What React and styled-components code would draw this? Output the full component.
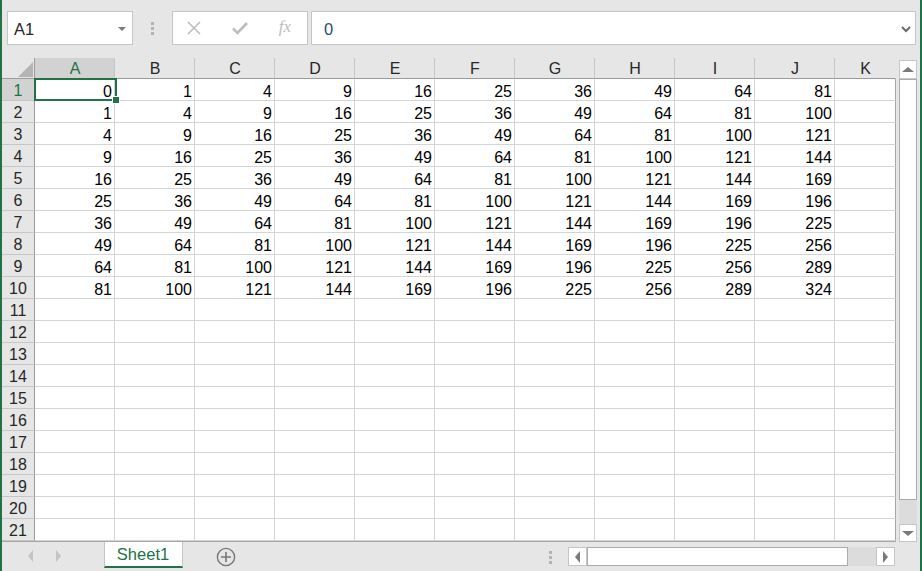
import React from 'react';
import styled, { createGlobalStyle } from 'styled-components';

const GlobalStyle = createGlobalStyle`
    html, body {
        margin: 0;
        padding: 0;
        background: #e6e6e6;
        font-family: "Liberation Sans", Arial, sans-serif;
    }
`;

const GREEN = '#217346';
const COLS = ['A', 'B', 'C', 'D', 'E', 'F', 'G', 'H', 'I', 'J', 'K'];
const ROWS = 21;

const Frame = styled.div`
    width: 922px;
    height: 571px;
    box-sizing: border-box;
    border-left: 2px solid ${GREEN};
    border-right: 2px solid ${GREEN};
    background: #e6e6e6;
    display: flex;
    flex-direction: column;
    overflow: hidden;
`;

const Toolbar = styled.div`
    height: 58px;
    box-sizing: border-box;
    padding: 11px 4px 0 5px;
    display: flex;
    align-items: flex-start;
`;

const Box = styled.div`
    height: 34px;
    box-sizing: border-box;
    background: #fff;
    border: 1px solid #c6c6c6;
    display: flex;
    align-items: center;
    position: relative;
`;

const NameBox = styled(Box)`
    width: 126px;
    padding: 2px 0 0 6px;
    font-size: 16.5px;
    color: #262626;
`;

const DropArrow = styled.span`
    position: absolute;
    right: 6px;
    top: 15px;
    width: 0;
    height: 0;
    border-left: 4px solid transparent;
    border-right: 4px solid transparent;
    border-top: 4px solid #7a7a7a;
`;

const Grip = styled.div`
    width: ${p => p.$w}px;
    height: ${p => p.$h}px;
    margin-right: ${p => p.$mr || 0}px;
    display: flex;
    flex-direction: column;
    align-items: center;
    justify-content: center;
    gap: 2px;
    padding-top: ${p => p.$top || 0}px;
    box-sizing: border-box;

    span {
        width: 3px;
        height: 3px;
        background: #b3b3b3;
    }
`;

const ControlBox = styled(Box)`
    width: 136px;
    justify-content: space-between;
    padding: 0 16px 0 13px;
`;

const Fx = styled.span`
    font-family: "Liberation Serif", "Times New Roman", serif;
    font-style: italic;
    font-size: 17px;
    color: #bdbdbd;
    margin-top: -2px;
`;

const FormulaBox = styled(Box)`
    flex: 1;
    margin-left: 3px;
    padding: 2px 0 0 12px;
    font-size: 16.5px;
    color: #2e4d6e;
`;

const Chevron = styled.svg`
    position: absolute;
    right: 4px;
    top: 13px;
`;

const Body = styled.div`
    display: flex;
    height: 484px;
`;

const Sheet = styled.div`
    width: 894px;
    height: 484px;
    background: #fff;
    position: relative;
    overflow: hidden;
    display: grid;
    grid-template-columns: 33px repeat(10, 80px) 61px;
    grid-template-rows: 21px repeat(${ROWS}, 22px);
    border-bottom: 1px solid #a6a6a6;
    box-sizing: border-box;
`;

const Corner = styled.div`
    background: #e6e6e6;
    border-right: 1px solid #9b9b9b;
    border-bottom: 1px solid #9b9b9b;
    box-sizing: border-box;
    position: relative;

    svg {
        position: absolute;
        left: 0;
        top: 0;
    }
`;

const ColHead = styled.div`
    background: ${p => (p.$active ? '#d2d2d2' : '#e6e6e6')};
    color: ${p => (p.$active ? GREEN : '#262626')};
    border-right: 1px solid ${p => (p.$last ? '#e6e6e6' : '#c6c6c6')};
    border-bottom: 1px solid #9b9b9b;
    box-sizing: border-box;
    font-size: 16px;
    display: flex;
    align-items: center;
    justify-content: center;
    padding: 1px 0 0 1px;
`;

const RowHead = styled.div`
    background: ${p => (p.$active ? '#d2d2d2' : '#e6e6e6')};
    color: ${p => (p.$active ? GREEN : '#262626')};
    border-right: 1px solid #9b9b9b;
    border-bottom: 1px solid #c6c6c6;
    box-sizing: border-box;
    font-size: 16px;
    display: flex;
    align-items: center;
    justify-content: center;
    padding-top: 3px;
`;

const Cell = styled.div`
    border-right: 1px solid ${p => (p.$last ? '#a6a6a6' : '#d4d4d4')};
    border-bottom: 1px solid #d4d4d4;
    box-sizing: border-box;
    font-size: 16px;
    color: #000;
    text-align: right;
    padding: 3px 2px 0 0;
    line-height: 19px;
`;

const Selection = styled.div`
    position: absolute;
    left: 32px;
    top: 20px;
    width: 83px;
    height: 23px;
    border: 2px solid ${GREEN};
    box-sizing: border-box;
    pointer-events: none;
`;

const FillHandle = styled.span`
    position: absolute;
    right: -5px;
    bottom: -5px;
    width: 6px;
    height: 6px;
    background: ${GREEN};
    border: 1px solid #fff;
`;

const VScroll = styled.div`
    width: 18px;
    margin: 2px 0 0 3px;
    height: 482px;
    display: flex;
    flex-direction: column;
    background: #dcdcdc;
`;

const ScrollBtn = styled.div`
    width: ${p => p.$w || 18}px;
    height: ${p => p.$h || 18}px;
    flex: none;
    box-sizing: border-box;
    background: #fff;
    border: 1px solid #c6c6c6;
    display: flex;
    align-items: center;
    justify-content: center;
`;

const Arrow = styled.span`
    width: 0;
    height: 0;
    border: 5px solid transparent;
    ${p => p.$dir === 'up' && `border-bottom-color: #7a7a7a; border-top-width: 0; border-left-width: 6px; border-right-width: 6px; border-bottom-width: 5px;`}
    ${p => p.$dir === 'down' && `border-top-color: #7a7a7a; border-bottom-width: 0; border-left-width: 6px; border-right-width: 6px; border-top-width: 5px;`}
    ${p => p.$dir === 'left' && `border-right-color: ${p.$c || '#7a7a7a'}; border-left-width: 0; border-top-width: 6px; border-bottom-width: 6px; border-right-width: 5px;`}
    ${p => p.$dir === 'right' && `border-left-color: ${p.$c || '#7a7a7a'}; border-right-width: 0; border-top-width: 6px; border-bottom-width: 6px; border-left-width: 5px;`}
`;

const VThumb = styled.div`
    height: 421px;
    flex: none;
    background: #fff;
    border: 1px solid #ababab;
    box-sizing: border-box;
`;

const Spacer = styled.div`
    flex: 1;
`;

const TabBar = styled.div`
    flex: 1;
    display: flex;
    align-items: flex-start;
`;

const Nav = styled.div`
    width: 102px;
    height: 28px;
    display: flex;
    align-items: center;
    gap: 23px;
    padding-left: 26px;
    box-sizing: border-box;
`;

const Tab = styled.div`
    width: 79px;
    height: 26px;
    box-sizing: border-box;
    background: #fff;
    border-left: 1px solid #c6c6c6;
    border-right: 1px solid #c6c6c6;
    border-bottom: 2px solid ${GREEN};
    color: ${GREEN};
    font-size: 16.5px;
    display: flex;
    align-items: center;
    justify-content: center;
    padding: 1px 1px 0 0;
`;

const AddButton = styled.div`
    margin: 5px 0 0 33px;
    width: 20px;
    height: 20px;
`;

const HScroll = styled.div`
    display: flex;
    margin: 5px 25px 0 0;
    width: 327px;
    height: 19px;
    background: #dcdcdc;
`;

const HThumb = styled.div`
    width: 261px;
    height: 19px;
    background: #fff;
    border: 1px solid #ababab;
    box-sizing: border-box;
`;

const value = (r, c) => (r + c) * (r + c);

const App = () => {
    const cells = [];
    for (let r = 0; r < ROWS; r++) {
        cells.push(
            <RowHead key={`r${r}`} $active={r === 0}>{r + 1}</RowHead>
        );
        COLS.forEach((col, c) => {
            const hasValue = r < 10 && c < 10;
            cells.push(
                <Cell key={`${col}${r}`} $last={c === COLS.length - 1}>
                    {hasValue ? value(r, c) : ''}
                </Cell>
            );
        });
    }

    return (
        <>
            <GlobalStyle />
            <Frame>
                <Toolbar>
                    <NameBox>
                        A1
                        <DropArrow />
                    </NameBox>
                    <Grip $w={39} $h={34}>
                        <span /><span /><span />
                    </Grip>
                    <ControlBox>
                        <svg width="16" height="16" viewBox="0 0 16 16">
                            <path d="M2 2 L14 14 M14 2 L2 14" stroke="#bdbdbd" strokeWidth="1.6" fill="none" />
                        </svg>
                        <svg width="18" height="16" viewBox="0 0 18 16">
                            <path d="M2 8.5 L6.5 13 L16 3" stroke="#bdbdbd" strokeWidth="2.6" fill="none" />
                        </svg>
                        <Fx>fx</Fx>
                    </ControlBox>
                    <FormulaBox>
                        0
                        <Chevron width="10" height="8" viewBox="0 0 10 8">
                            <path d="M1 2 L5 6 L9 2" stroke="#6a6a6a" strokeWidth="2" fill="none" />
                        </Chevron>
                    </FormulaBox>
                </Toolbar>

                <Body>
                    <Sheet>
                        <Corner>
                            <svg width="33" height="21" viewBox="0 0 33 21">
                                <polygon points="31,4 31,19 16,19" fill="#b4b4b4" />
                            </svg>
                        </Corner>
                        {COLS.map((col, i) => (
                            <ColHead key={col} $active={i === 0} $last={i === COLS.length - 1}>
                                {col}
                            </ColHead>
                        ))}
                        {cells}
                        <Selection>
                            <FillHandle />
                        </Selection>
                    </Sheet>
                    <VScroll>
                        <ScrollBtn $h={19}><Arrow $dir="up" /></ScrollBtn>
                        <VThumb />
                        <Spacer />
                        <ScrollBtn $h={18}><Arrow $dir="down" /></ScrollBtn>
                    </VScroll>
                </Body>

                <TabBar>
                    <Nav>
                        <Arrow $dir="left" $c="#c4c4c4" />
                        <Arrow $dir="right" $c="#c4c4c4" />
                    </Nav>
                    <Tab>Sheet1</Tab>
                    <AddButton>
                        <svg width="20" height="20" viewBox="0 0 20 20">
                            <circle cx="10" cy="10" r="8.6" stroke="#777" strokeWidth="1.4" fill="none" />
                            <path d="M10 5 V15 M5 10 H15" stroke="#777" strokeWidth="1.6" />
                        </svg>
                    </AddButton>
                    <Spacer />
                    <Grip $w={17} $h={28} $top={2} $mr={9}>
                        <span /><span /><span />
                    </Grip>
                    <HScroll>
                        <ScrollBtn $w={19} $h={19}><Arrow $dir="left" /></ScrollBtn>
                        <HThumb />
                        <Spacer />
                        <ScrollBtn $w={19} $h={19}><Arrow $dir="right" /></ScrollBtn>
                    </HScroll>
                </TabBar>
            </Frame>
        </>
    );
};

export default App;
